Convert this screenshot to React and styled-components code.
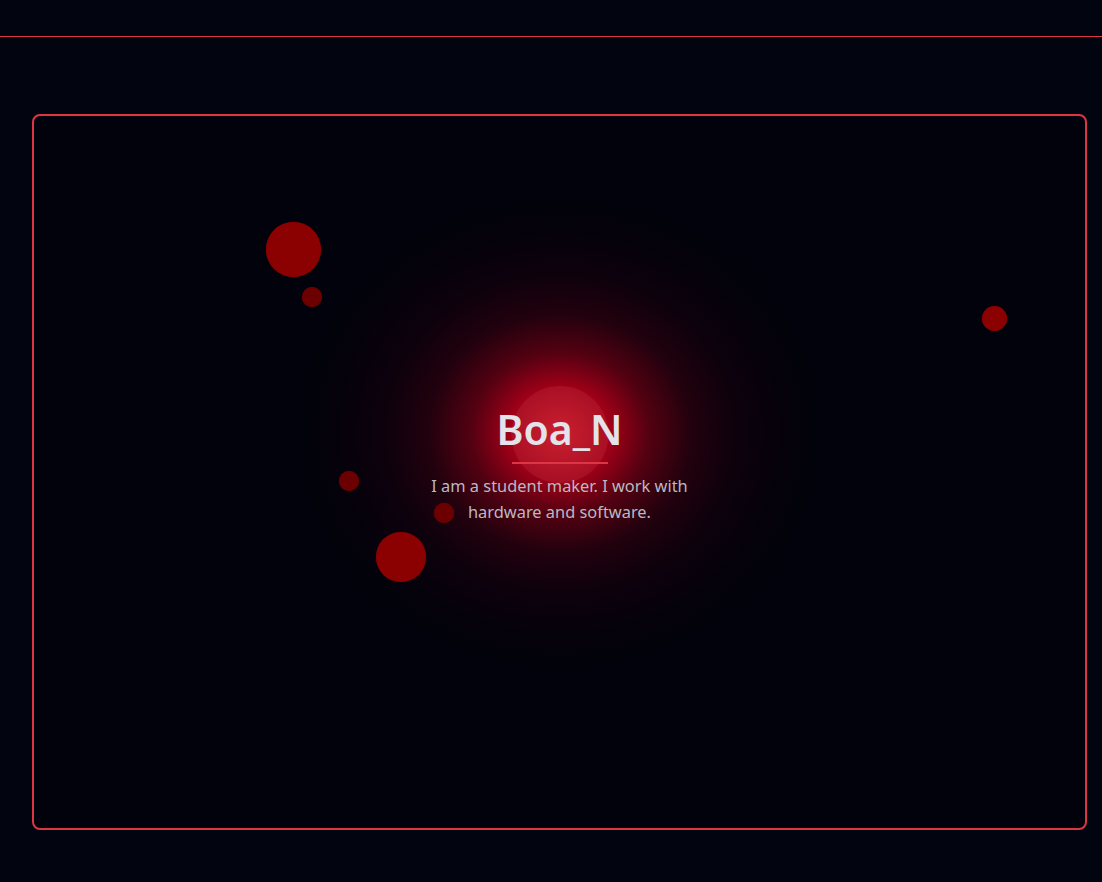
import styled, { createGlobalStyle } from "styled-components";

const Global = createGlobalStyle`
  html, body { margin:0; padding:0; background:#020510; }
  body { font-family:"Noto Sans", "Open Sans", sans-serif; color:#e2e2e8; }
  * { box-sizing:border-box; }
`;

const Page = styled.div`min-height:882px; background:#020510;`;
const Header = styled.header`height:37px; border-bottom:1px solid #dc3545;`;

const Hero = styled.section`
  position:relative; overflow:hidden;
  margin:77px 15px 0 32px; height:716px;
  border:2px solid #dc3545; border-radius:8px;
  background:#01020b;
  display:flex; align-items:center; justify-content:center;
  padding-bottom:18px;
`;

const Glow = styled.div`
  position:absolute; left:50%; top:317px;
  width:540px; height:490px; transform:translate(-50%, -50%);
  background:radial-gradient(ellipse closest-side,
    rgba(225,18,38,1) 0%,
    rgba(180,0,25,0.88) 19%,
    rgba(115,0,20,0.72) 33%,
    rgba(55,0,16,0.6) 49%,
    rgba(26,0,14,0.5) 65%,
    rgba(12,0,12,0.32) 84%,
    rgba(2,2,12,0) 100%);
  pointer-events:none;
`;

const Dot = styled.span`
  position:absolute; border-radius:50%;
  background:${p => p.$dim ? "#6c0000" : "#8b0000"};
  box-shadow:0 0 1px rgba(139,0,0,0.8);
`;

const Content = styled.div`
  position:relative; z-index:1;
  display:flex; flex-direction:column; align-items:center;
  text-align:center;
`;

const Orb = styled.div`
  position:absolute; left:50%; top:-15px; transform:translateX(-50%);
  width:97px; height:97px; border-radius:50%;
  background:radial-gradient(circle, rgba(190,35,50,0.72) 0%, rgba(175,25,45,0.6) 70%, rgba(165,20,40,0.5) 100%);
  z-index:-1;
`;

const Title = styled.h1`
  margin:0; font-size:41px; font-weight:600; line-height:56px;
  color:#e3e3e9; letter-spacing:0;
`;

const Rule = styled.div`
  width:96px; height:2px; background:#dc3545; margin:5px 0 9px;
`;

const Sub = styled.p`
  margin:0; max-width:290px; font-size:16.4px; line-height:26px;
  color:#b9b9c3;
`;

const dots = [
  { x:232, y:106, s:55 },
  { x:268, y:171, s:20, dim:true },
  { x:305, y:355, s:20, dim:true },
  { x:400, y:387, s:20, dim:true },
  { x:342, y:416, s:50 },
  { x:948, y:190, s:25 },
];

export default function App(){
  return (
    <Page>
      <Global/>
      <Header/>
      <Hero>
        <Glow/>
        {dots.map((d,i)=>(
          <Dot key={i} $dim={d.dim} style={{left:d.x, top:d.y, width:d.s, height:d.s}}/>
        ))}
        <Content>
          <Orb/>
          <Title>Boa_N</Title>
          <Rule/>
          <Sub>I am a student maker. I work with hardware and software.</Sub>
        </Content>
      </Hero>
    </Page>
  );
}
